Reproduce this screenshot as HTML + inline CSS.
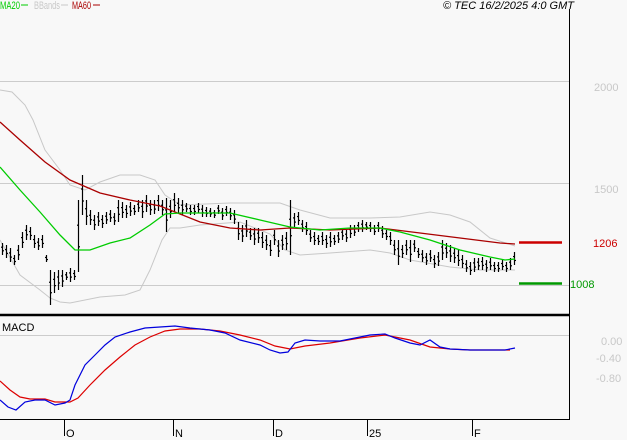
<!DOCTYPE html><html><head><meta charset="utf-8"><style>
html,body{margin:0;padding:0;background:#f8f8f8;width:627px;height:440px;overflow:hidden}
svg{display:block}
text{font-family:"Liberation Sans",sans-serif;font-size:11px}
</style></head><body>
<svg id="s" width="627" height="440" xmlns="http://www.w3.org/2000/svg">
<rect width="627" height="440" fill="#f8f8f8"/>
<g stroke="#cccccc" stroke-width="1">
<line x1="0" y1="81.5" x2="569" y2="81.5"/>
<line x1="0" y1="183.5" x2="569" y2="183.5"/>
<line x1="0" y1="285.5" x2="569" y2="285.5"/>
<line x1="0" y1="335.5" x2="569" y2="335.5"/>
</g>
<g stroke="#000" fill="none">
<line x1="569.5" y1="9" x2="569.5" y2="420"/>
<line x1="0" y1="315" x2="570" y2="315" stroke-width="2.5"/>
<line x1="0" y1="419.5" x2="570" y2="419.5"/>
<line x1="64.5" y1="419" x2="64.5" y2="436"/>
<line x1="173.5" y1="419" x2="173.5" y2="436"/>
<line x1="273.5" y1="419" x2="273.5" y2="436"/>
<line x1="367.5" y1="419" x2="367.5" y2="436"/>
<line x1="472.5" y1="419" x2="472.5" y2="436"/>
</g>
<g fill="#000"><text x="66" y="437">O</text><text x="175" y="437">N</text><text x="275" y="437">D</text><text x="369" y="437">25</text><text x="474" y="437">F</text></g>
<polyline fill="none" stroke="#c8c8c8" points="0,90 12,92 25,105 33,120 45,150 60,170 70,185 85,190 100,182 120,175 140,175 155,180 165,195 180,205 230,203 280,203 300,210 330,218 370,218 400,217 430,212 450,215 470,222 490,238 515,246"/>
<polyline fill="none" stroke="#c8c8c8" points="0,240 20,275 40,290 50,298 60,302 70,303 100,297 125,295 140,290 150,270 162,240 170,228 180,228 200,225 240,222 270,234 285,250 300,255 330,253 370,250 390,253 410,260 450,267 480,270 515,270"/>
<g id="bars" stroke="#000" stroke-width="1.2"></g>
<polyline fill="none" stroke="#aa0000" stroke-width="1.3" points="0,122 20,140 45,162 70,180 100,193 130,200 160,206 200,222 230,228 260,230 290,228 330,230 380,228 420,233 460,238 500,243 515,244"/>
<polyline fill="none" stroke="#00cc00" stroke-width="1.3" points="0,167 20,190 40,212 60,235 75,250 90,250 110,243 130,238 150,225 165,214 180,213 200,213 230,213 260,220 290,227 320,230 350,228 380,228 400,232 430,240 460,250 490,257 505,260 515,259"/>
<line x1="519" y1="242.5" x2="562" y2="242.5" stroke="#cc0000" stroke-width="2.5"/>
<line x1="519" y1="283.5" x2="562" y2="283.5" stroke="#009900" stroke-width="2.5"/>
<polyline fill="none" stroke="#dd0000" stroke-width="1.2" points="0,381 10,390 20,397 30,399 45,399 55,402 70,402 78,398 90,385 105,370 120,357 135,345 150,337 165,331 180,329 200,329 220,331 240,335 260,340 275,346 290,349 305,346 330,343 360,338 385,335 410,340 430,347 450,349 470,350 490,350 510,350"/>
<polyline fill="none" stroke="#0000dd" stroke-width="1.2" points="0,400 8,407 16,410 25,402 35,400 45,400 55,405 65,403 70,400 75,385 85,365 95,355 105,345 115,337 130,332 145,328 160,327 175,326 190,328 210,330 225,333 240,340 260,345 270,350 280,353 288,352 295,343 305,340 320,341 340,341 355,338 370,335 385,334 395,338 410,343 420,345 430,340 440,347 450,349 470,350 490,350 505,350 515,348"/>
<text x="2" y="331" fill="#000">MACD</text>
<text x="0" y="9" fill="#00cc00" textLength="20" lengthAdjust="spacingAndGlyphs">MA20</text><line x1="21" y1="5" x2="28" y2="5" stroke="#00cc00"/>
<text x="34" y="9" fill="#c8c8c8" textLength="26" lengthAdjust="spacingAndGlyphs">BBands</text><line x1="61" y1="5" x2="68" y2="5" stroke="#c8c8c8"/>
<text x="72" y="9" fill="#aa0000" textLength="19" lengthAdjust="spacingAndGlyphs">MA60</text><line x1="93" y1="5" x2="100" y2="5" stroke="#aa0000"/>
<text x="574" y="9" text-anchor="end" font-style="italic" fill="#000">© TEC 16/2/2025 4:0 GMT</text>
<g fill="#c8c8c8"><text x="594" y="91">2000</text><text x="594" y="193">1500</text><text x="601" y="345">0.00</text><text x="596" y="362">-0.40</text><text x="596" y="382">-0.80</text></g>
<text x="593" y="247" fill="#cc0000">1206</text>
<text x="570" y="288" fill="#009900">1008</text>
</svg>
<script>
var b=[[2,243,255],[6,245,258],[10,248,262],[14,255,265],[18,245,260],[22,232,248],[26,225,240],[30,227,240],[34,235,248],[38,238,250],[42,235,248],[46,255,262],[50,270,305],[54,272,293],[58,270,290],[62,270,287],[66,272,280],[70,268,282],[74,270,280],[78,200,272],[82,175,215],[86,200,225],[90,210,225],[94,215,230],[98,212,226],[102,215,228],[106,212,224],[110,210,222],[114,213,225],[118,200,222],[122,202,218],[126,205,218],[130,202,216],[134,205,215],[138,200,212],[142,200,218],[146,195,212],[150,200,215],[154,200,214],[158,195,211],[162,200,215],[166,198,232],[170,200,218],[174,193,212],[178,198,213],[182,200,215],[186,203,212],[190,205,215],[194,205,215],[198,203,213],[202,205,217],[206,207,217],[210,208,217],[214,210,218],[218,205,214],[222,208,220],[226,206,216],[230,208,220],[234,210,224],[238,222,240],[242,225,242],[246,220,237],[250,228,240],[254,228,245],[258,228,243],[262,232,248],[266,235,250],[270,240,256],[274,230,245],[278,240,257],[282,235,250],[286,232,250],[290,200,255],[294,213,227],[298,212,225],[302,220,232],[306,222,235],[310,230,242],[314,232,245],[318,235,245],[322,232,245],[326,235,248],[330,232,247],[334,235,245],[338,232,243],[342,228,240],[346,230,242],[350,225,238],[354,225,236],[358,222,232],[362,220,232],[366,222,230],[370,222,232],[374,225,235],[378,222,232],[382,226,238],[386,230,240],[390,232,245],[394,240,255],[398,240,265],[402,245,258],[406,240,255],[410,240,262],[414,240,252],[418,248,258],[422,250,262],[426,253,265],[430,250,262],[434,255,268],[438,252,266],[442,240,260],[446,243,258],[450,245,262],[454,248,263],[458,250,266],[462,255,268],[466,260,272],[470,262,275],[474,258,272],[478,258,270],[482,257,270],[486,260,272],[490,258,270],[494,262,272],[498,262,272],[502,260,270],[506,262,272],[510,258,270],[514,252,265]];
var g=document.getElementById('bars'),h='';
b.forEach(function(a,i){var x=a[0]+.5,o=a[1]+(a[2]-a[1])*0.35,c=a[1]+(a[2]-a[1])*0.65;
h+='<line x1="'+x+'" y1="'+a[1]+'" x2="'+x+'" y2="'+a[2]+'"/><line x1="'+(x-1.5)+'" y1="'+o+'" x2="'+x+'" y2="'+o+'"/><line x1="'+x+'" y1="'+c+'" x2="'+(x+1.5)+'" y2="'+c+'"/>';});
g.innerHTML=h;
</script>
</body></html>
